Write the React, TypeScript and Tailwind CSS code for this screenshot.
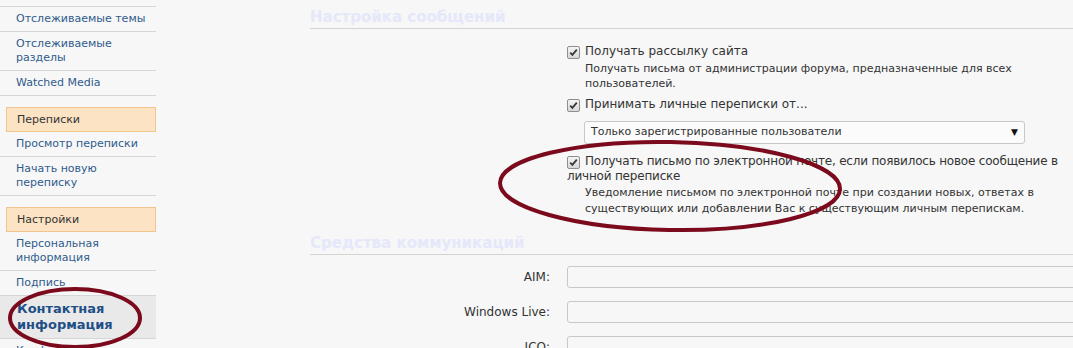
import React from 'react';

const font = { fontFamily: '"DejaVu Sans", Verdana, sans-serif' };

function NavItem({ children, active }: { children: React.ReactNode; active?: boolean }) {
  if (active) {
    return (
      <div className="pl-[17px] pr-[4px] py-[5px] border-b border-[#d6d6d6] bg-[#e9e9e9] text-[13px] leading-[16px] font-bold text-[#1f4f87] whitespace-nowrap">
        {children}
      </div>
    );
  }
  return (
    <div className="pl-[16px] pr-[4px] py-[5px] border-b border-[#d6d6d6] text-[11px] leading-[14px] text-[#2f5b8c]">
      {children}
    </div>
  );
}

function NavHeader({ children }: { children: React.ReactNode }) {
  return (
    <div className="mt-[11px] ml-[6px] px-[10px] py-[5px] border border-[#f2c48e] bg-[#fce3c4] text-[11px] leading-[13px] text-[#333]">
      {children}
    </div>
  );
}

function Check() {
  return (
    <span className="inline-flex items-center justify-center w-[13px] h-[13px] mr-[5px] align-[-2px] rounded-[2px] border border-[#8e8e8e] bg-gradient-to-b from-[#f4f4f4] to-[#d8d8d8]">
      <svg width="9" height="9" viewBox="0 0 9 9">
        <path d="M1.2 4.6 L3.4 6.9 L7.8 1.6" fill="none" stroke="#3a3a3a" strokeWidth="1.8" />
      </svg>
    </span>
  );
}

function FieldRow({ label, className }: { label: string; className?: string }) {
  return (
    <div className={`flex items-center ${className ?? ''}`}>
      <div className="w-[240px] shrink-0 text-right text-[12px] leading-[15px] text-[#333]">{label}</div>
      <div className="ml-[17px] w-[600px] h-[22px] shrink-0 rounded-[3px] border border-[#c8c8c8] bg-[#f7f7f7]" />
    </div>
  );
}

export default function App() {
  return (
    <div className="relative w-[1073px] h-[348px] overflow-hidden bg-[#f7f7f7] flex" style={font}>
      {/* sidebar */}
      <div className="w-[156px] shrink-0">
        <div className="h-[7px] border-b border-[#d6d6d6]" />
        <NavItem>Отслеживаемые темы</NavItem>
        <NavItem>Отслеживаемые разделы</NavItem>
        <NavItem>Watched Media</NavItem>
        <NavHeader>Переписки</NavHeader>
        <NavItem>Просмотр переписки</NavItem>
        <NavItem>Начать новую переписку</NavItem>
        <NavHeader>Настройки</NavHeader>
        <NavItem>Персональная информация</NavItem>
        <NavItem>Подпись</NavItem>
        <NavItem active>
          Контактная
          <br />
          информация
        </NavItem>
        <NavItem>Конфиденциальность</NavItem>
      </div>

      {/* main */}
      <div className="flex-1 min-w-0 pl-[154px]">
        <h2 className="mt-[8px] pb-[2px] leading-[18px] text-[15px] font-bold text-[#e4e8fa] border-b border-[#d4d4d4]">
          Настройка сообщений
        </h2>

        <div className="pl-[257px] pt-[15px] text-[#333]">
          <div className="text-[12px] leading-[15px]">
            <Check />
            Получать рассылку сайта
          </div>
          <div className="mt-[2px] pl-[18px] pr-[6px] text-[11px] leading-[15px]">
            Получать письма от администрации форума, предназначенные для всех пользователей.
          </div>

          <div className="mt-[6px] text-[12px] leading-[15px]">
            <Check />
            Принимать личные переписки от...
          </div>
          <div className="mt-[9px] ml-[17px] w-[441px] h-[23px] rounded-[3px] border border-[#c8c8c8] bg-[#fbfbfb] flex items-center justify-between pl-[6px] pr-[6px] text-[11px]">
            <span>Только зарегистрированные пользователи</span>
            <span className="text-[9px] text-[#111]">▼</span>
          </div>

          <div className="mt-[10px] text-[12px] leading-[15px] tracking-[-0.2px]">
            <span className="whitespace-nowrap">
              <Check />
              Получать письмо по электронной почте, если появилось новое сообщение в
            </span>
            <br />
            личной переписке
          </div>
          <div className="mt-[1px] pl-[18px] pr-[6px] text-[11px] leading-[16px]">
            Уведомление письмом по электронной почте при создании новых, ответах в существующих или добавлении Вас к существующим личным перепискам.
          </div>
        </div>

        <h2 className="mt-[17px] pb-[2px] leading-[18px] text-[15px] font-bold text-[#e4e8fa] border-b border-[#d4d4d4]">
          Средства коммуникаций
        </h2>

        <FieldRow label="AIM:" className="mt-[11px]" />
        <FieldRow label="Windows Live:" className="mt-[13px]" />
        <FieldRow label="ICQ:" className="mt-[13px]" />
      </div>

      {/* hand-drawn highlight marks */}
      <svg className="absolute inset-0 pointer-events-none" width="1073" height="348">
        <ellipse cx="670" cy="186" rx="170" ry="44" fill="none" stroke="#7b0a1c" strokeWidth="4" transform="rotate(1 670 186)" />
        <ellipse cx="75" cy="318" rx="65" ry="29" fill="none" stroke="#7b0a1c" strokeWidth="4" />
      </svg>
    </div>
  );
}
